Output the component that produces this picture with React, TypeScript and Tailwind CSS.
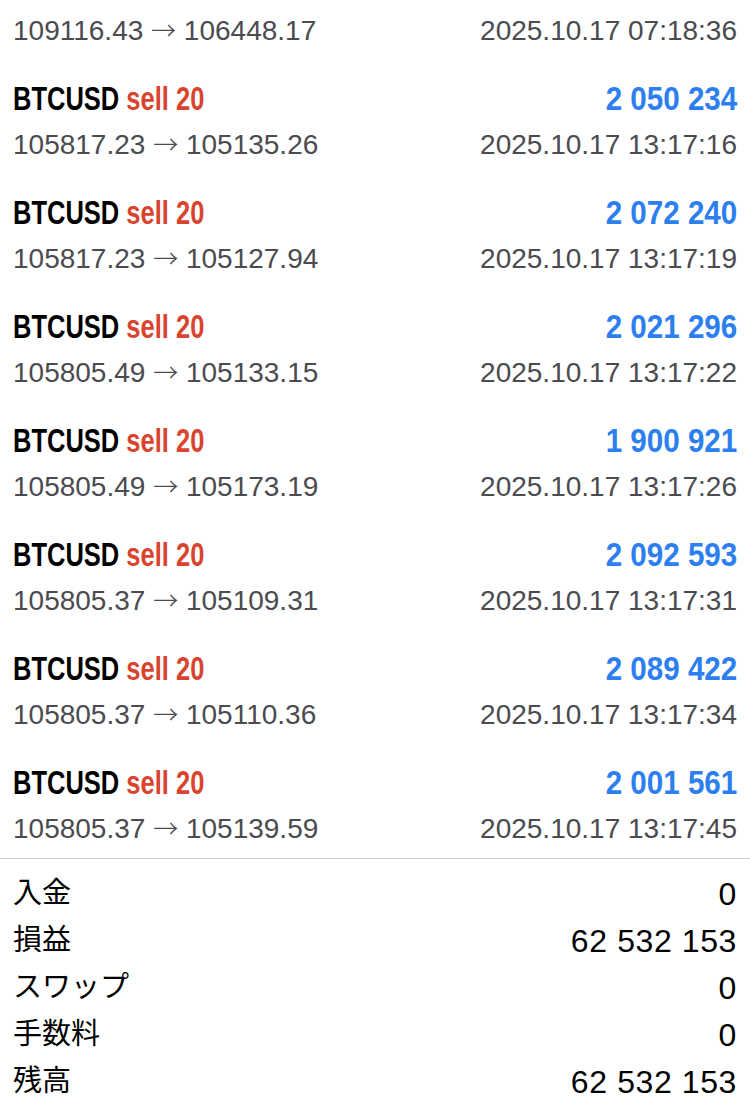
const trades = [
  { amount: "2 050 234", prices: "105817.23 → 105135.26", time: "2025.10.17 13:17:16" },
  { amount: "2 072 240", prices: "105817.23 → 105127.94", time: "2025.10.17 13:17:19" },
  { amount: "2 021 296", prices: "105805.49 → 105133.15", time: "2025.10.17 13:17:22" },
  { amount: "1 900 921", prices: "105805.49 → 105173.19", time: "2025.10.17 13:17:26" },
  { amount: "2 092 593", prices: "105805.37 → 105109.31", time: "2025.10.17 13:17:31" },
  { amount: "2 089 422", prices: "105805.37 → 105110.36", time: "2025.10.17 13:17:34" },
  { amount: "2 001 561", prices: "105805.37 → 105139.59", time: "2025.10.17 13:17:45" },
];

const summary = [
  { label: "入金", value: "0" },
  { label: "損益", value: "62 532 153" },
  { label: "スワップ", value: "0" },
  { label: "手数料", value: "0" },
  { label: "残高", value: "62 532 153" },
];

const sans = "font-['Liberation_Sans','Noto_Sans_CJK_JP',sans-serif]";

function SubLine({ prices, time }: { prices: string; time: string }) {
  const [from, to] = prices.split(" → ");
  return (
    <div className={`flex justify-between items-center h-[47px] text-[28px] text-[#4b4b50] ${sans}`}>
      <span>
        {from} <span className="font-['Noto_Sans_CJK_JP',sans-serif] text-[25px] font-light">→</span> {to}
      </span>
      <span>{time}</span>
    </div>
  );
}

function TradeRow({ amount, prices, time }: { amount: string; prices: string; time: string }) {
  return (
    <div className="flex flex-col">
      <div className={`flex justify-between items-end h-[67px] pb-[6px] ${sans} font-bold text-[34px] leading-none`}>
        <div className="inline-block origin-left scale-x-[0.75] whitespace-nowrap">
          <span className="text-black">BTCUSD</span>{" "}
          <span className="text-[#d9442f]">sell 20</span>
        </div>
        <span className="inline-block origin-right scale-x-[0.87] whitespace-nowrap text-[#2d7ff0]">{amount}</span>
      </div>
      <SubLine prices={prices} time={time} />
    </div>
  );
}

export default function App() {
  return (
    <div className="w-[750px] h-[1100px] bg-white overflow-hidden">
      <div className="px-[13px] pt-[7px]">
        <SubLine prices="109116.43 → 106448.17" time="2025.10.17 07:18:36" />
        {trades.map((t) => (
          <TradeRow key={t.time} {...t} />
        ))}
      </div>
      <div className="mt-[6px] border-t border-[#d0d0d4]" />
      <div className={`px-[13px] pt-[11px] text-black ${sans}`}>
        {summary.map((s) => (
          <div key={s.label} className="flex justify-between items-center h-[47px]">
            <span className="text-[29px]">{s.label}</span>
            <span className="text-[32px] tracking-[0.6px]">{s.value}</span>
          </div>
        ))}
      </div>
    </div>
  );
}
